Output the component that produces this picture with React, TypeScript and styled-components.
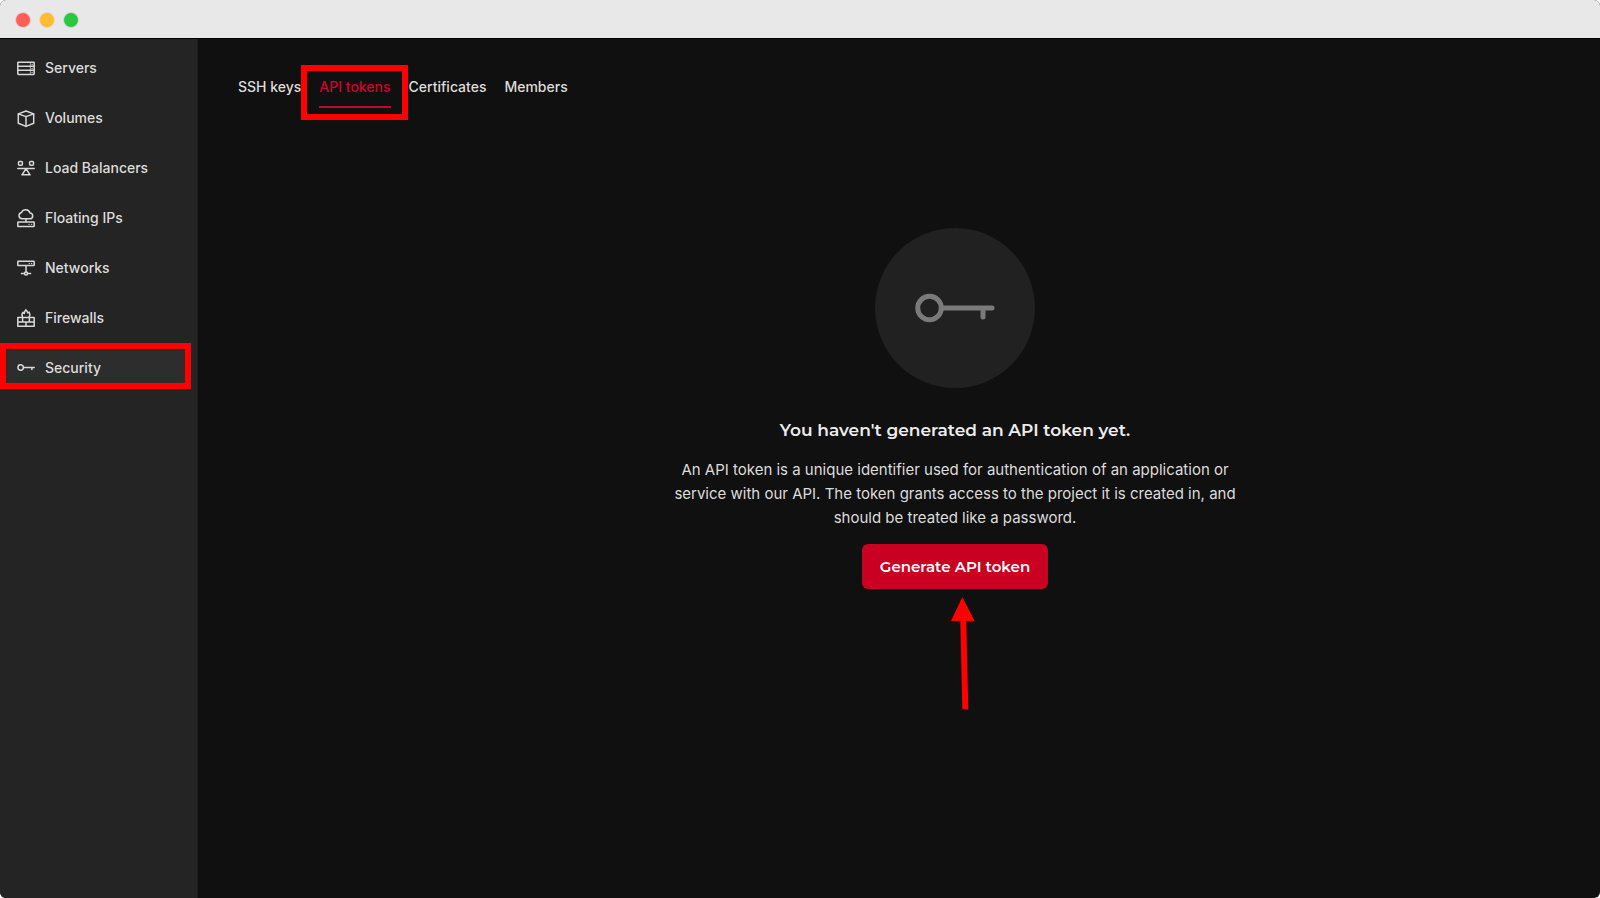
import React from "react";
import styled, { createGlobalStyle } from "styled-components";

const GlobalStyle = createGlobalStyle`
  *, *::before, *::after { box-sizing: border-box; }
  body {
    margin: 0;
    background: #ffffff;
    font-family: Inter, "Liberation Sans", sans-serif;
    color: #dcdcdc;
  }
`;

const Window = styled.div`
  display: flex;
  flex-direction: column;
  min-height: 100vh;
  border-radius: 6px;
  overflow: hidden;
  background: #101010;
`;

const TitleBar = styled.header`
  display: flex;
  align-items: center;
  gap: 8px;
  height: 39px;
  padding: 1px 15px 0;
  background: #e8e8e8;
  border-bottom: 1px solid #000000;
`;

const WindowDot = styled.button<{ $color: string }>`
  width: 16px;
  height: 16px;
  padding: 0;
  border: 1px solid #e0d8d4;
  border-radius: 50%;
  background: ${(p) => p.$color};
`;

const Body = styled.div`
  display: flex;
  flex: 1;
`;

const Sidebar = styled.nav`
  flex: none;
  width: 198px;
  background: #242424;
  border-right: 1px solid #1d1d1d;
`;

const NavList = styled.ul`
  display: flex;
  flex-direction: column;
  gap: 14px;
  margin: 0;
  padding: 11px 6px 0 5px;
  list-style: none;
`;

const NavItem = styled.li`
  position: relative;
`;

const NavLink = styled.a<{ $active: boolean }>`
  display: flex;
  align-items: center;
  gap: 10px;
  height: 36px;
  padding: 0 12px;
  background: ${(p) => (p.$active ? "#2d2d2d" : "transparent")};
  color: #dcdcdc;
  font-size: 14px;
  font-weight: 500;
  line-height: 20px;
  text-decoration: none;
`;

const NavIcon = styled.svg`
  flex: none;
  width: 18px;
  height: 20px;
  fill: none;
  stroke: #d8d8d8;
  stroke-width: 1.5;
  stroke-linejoin: round;
  stroke-linecap: round;
`;

const NavMarker = styled.span`
  position: absolute;
  inset: -7px 0 -3px -5px;
  border: 6px solid #ff0000;
  pointer-events: none;
`;

const Main = styled.main`
  flex: 1;
  min-width: 0;
`;

const Tabs = styled.nav`
  display: flex;
  gap: 18px;
  padding: 38px 40px 0;
`;

const TabSlot = styled.div`
  position: relative;
`;

const Tab = styled.a<{ $active: boolean }>`
  display: block;
  padding-bottom: 9px;
  border-bottom: 2px solid ${(p) => (p.$active ? "#c8002f" : "transparent")};
  color: ${(p) => (p.$active ? "#d2002e" : "#dcdcdc")};
  font-size: 14px;
  font-weight: 500;
  line-height: 20px;
  text-decoration: none;
`;

const TabMarker = styled.span`
  position: absolute;
  inset: -12px -17px -12px -18px;
  border: 6px solid #ff0000;
  pointer-events: none;
`;

const EmptyState = styled.section`
  display: flex;
  flex-direction: column;
  align-items: center;
  padding: 120px 0 0 112px;
  text-align: center;
`;

const Badge = styled.div`
  display: flex;
  align-items: center;
  justify-content: center;
  width: 160px;
  height: 160px;
  border-radius: 50%;
  background: #212121;
`;

const BadgeIcon = styled.svg`
  width: 80px;
  height: 32px;
  fill: none;
  stroke: #7a7a7a;
  stroke-width: 5;
  stroke-linecap: round;
`;

const Heading = styled.h1`
  margin: 30px 0 0;
  color: #ececec;
  font-family: Montserrat, Inter, sans-serif;
  font-size: 17px;
  font-weight: 600;
  line-height: 24px;
`;

const Description = styled.p`
  max-width: 580px;
  margin: 16px 0 0;
  font-size: 15px;
  line-height: 24px;
`;

const PrimaryButton = styled.button`
  height: 45px;
  margin-top: 14px;
  padding: 0 18px;
  border: 0;
  border-radius: 6px;
  background: #c90022;
  color: #ffffff;
  font-family: Montserrat, Inter, sans-serif;
  font-size: 15px;
  font-weight: 600;
`;

const ButtonArea = styled.div`
  position: relative;
`;

const Arrow = styled.svg`
  position: absolute;
  top: 100%;
  left: 50%;
  width: 40px;
  height: 122px;
  margin: 6px 0 0 -10px;
`;

const navItems = [
  {
    label: "Servers",
    icon: (
      <>
        <rect x="0.8" y="4.2" width="16.4" height="12.2" rx="0.6" />
        <path d="M.8 8.3h16.4M.8 12.3h16.4" />
        <path d="M13.3 4.5v12" strokeWidth="0.7" />
        <path d="M15 6.3h.2M15 10.3h.2M15 14.3h.2" strokeWidth="1.2" />
      </>
    ),
  },
  {
    label: "Volumes",
    icon: (
      <>
        <path d="M9 3l7.7 2.9v9.3L9 18.4l-7.7-3.2V5.9z" />
        <path d="M1.3 5.9L9 8.6l7.7-2.7M9 8.6v9.8" />
      </>
    ),
  },
  {
    label: "Load Balancers",
    icon: (
      <>
        <rect x="1.5" y="3.4" width="3.9" height="3.9" rx="1" />
        <rect x="12.6" y="3.4" width="3.9" height="3.9" rx="1" />
        <path d="M.8 10.6h16.4M9 10.8l4.1 6H4.9z" />
      </>
    ),
  },
  {
    label: "Floating IPs",
    icon: (
      <>
        <path d="M5 10.8a3.2 3.2 0 0 1-.5-6.3A4.6 4.6 0 0 1 13 4.9a3 3 0 0 1 .4 5.9zM9 10.8v3" />
        <rect x="0.8" y="14" width="16.4" height="4.6" rx="0.5" />
        <path d="M12 16.3h.1M14.6 16.3h.1" strokeWidth="1.2" />
      </>
    ),
  },
  {
    label: "Networks",
    icon: (
      <>
        <rect x="0.8" y="3.2" width="16.4" height="4.4" rx="0.5" />
        <path d="M12.3 5.4h.1M14.6 5.4h.1" strokeWidth="1.2" />
        <path d="M9 7.8v6.4M4.4 15.5h3M10.6 15.5h3" />
        <circle cx="9" cy="15.5" r="1.5" />
      </>
    ),
  },
  {
    label: "Firewalls",
    icon: (
      <>
        <path d="M5.5 9.2C4.4 6.4 5.2 5 6 4.2l1.2 1.3C7.5 4 7.9 3 8.9 1.8c1 .8 1.5 1.7 1.9 3.1l1.4-.8c.8 1.6.9 3.3-.1 5.1" />
        <path d="M.8 9.6h4.5M12.7 9.6h4.5M.8 9.6v8.6h16.4V9.6M.8 13.9h16.4M6 9.6h6M5.6 10.5v3.4M12.4 10.5v3.4M9 13.9v4.3" />
      </>
    ),
  },
  {
    label: "Security",
    icon: (
      <>
        <circle cx="3.7" cy="9.5" r="2.7" />
        <path d="M6.5 9.5h10.7M14.9 9.5v2.1" />
      </>
    ),
  },
];

const tabs = ["SSH keys", "API tokens", "Certificates", "Members"];
const activeNav = "Security";
const activeTab = "API tokens";

export default function App() {
  return (
    <>
      <GlobalStyle />
      <Window>
        <TitleBar>
          <WindowDot $color="#ff5f57" aria-label="Close" />
          <WindowDot $color="#febc2e" aria-label="Minimize" />
          <WindowDot $color="#28c840" aria-label="Zoom" />
        </TitleBar>
        <Body>
          <Sidebar aria-label="Project">
            <NavList>
              {navItems.map(({ label, icon }) => (
                <NavItem key={label}>
                  <NavLink href="#" $active={label === activeNav}>
                    <NavIcon viewBox="0 0 18 20" aria-hidden="true">
                      {icon}
                    </NavIcon>
                    {label}
                  </NavLink>
                  {label === activeNav && <NavMarker />}
                </NavItem>
              ))}
            </NavList>
          </Sidebar>
          <Main>
            <Tabs aria-label="Security sections">
              {tabs.map((label) => (
                <TabSlot key={label}>
                  <Tab href="#" $active={label === activeTab}>
                    {label}
                  </Tab>
                  {label === activeTab && <TabMarker />}
                </TabSlot>
              ))}
            </Tabs>
            <EmptyState>
              <Badge>
                <BadgeIcon viewBox="0 0 80 32" aria-hidden="true">
                  <circle cx="14.5" cy="16" r="11.8" />
                  <path d="M28 16h49M68 16v9" />
                </BadgeIcon>
              </Badge>
              <Heading>You haven't generated an API token yet.</Heading>
              <Description>
                An API token is a unique identifier used for authentication of an application or
                service with our API. The token grants access to the project it is created in, and
                should be treated like a password.
              </Description>
              <ButtonArea>
                <PrimaryButton type="button">Generate API token</PrimaryButton>
                <Arrow viewBox="0 0 40 122" aria-hidden="true">
                  <path
                    d="M17.3 2L29.6 26h-8.3l2 88h-6l-2-88H6z"
                    fill="#ff0000"
                  />
                </Arrow>
              </ButtonArea>
            </EmptyState>
          </Main>
        </Body>
      </Window>
    </>
  );
}
